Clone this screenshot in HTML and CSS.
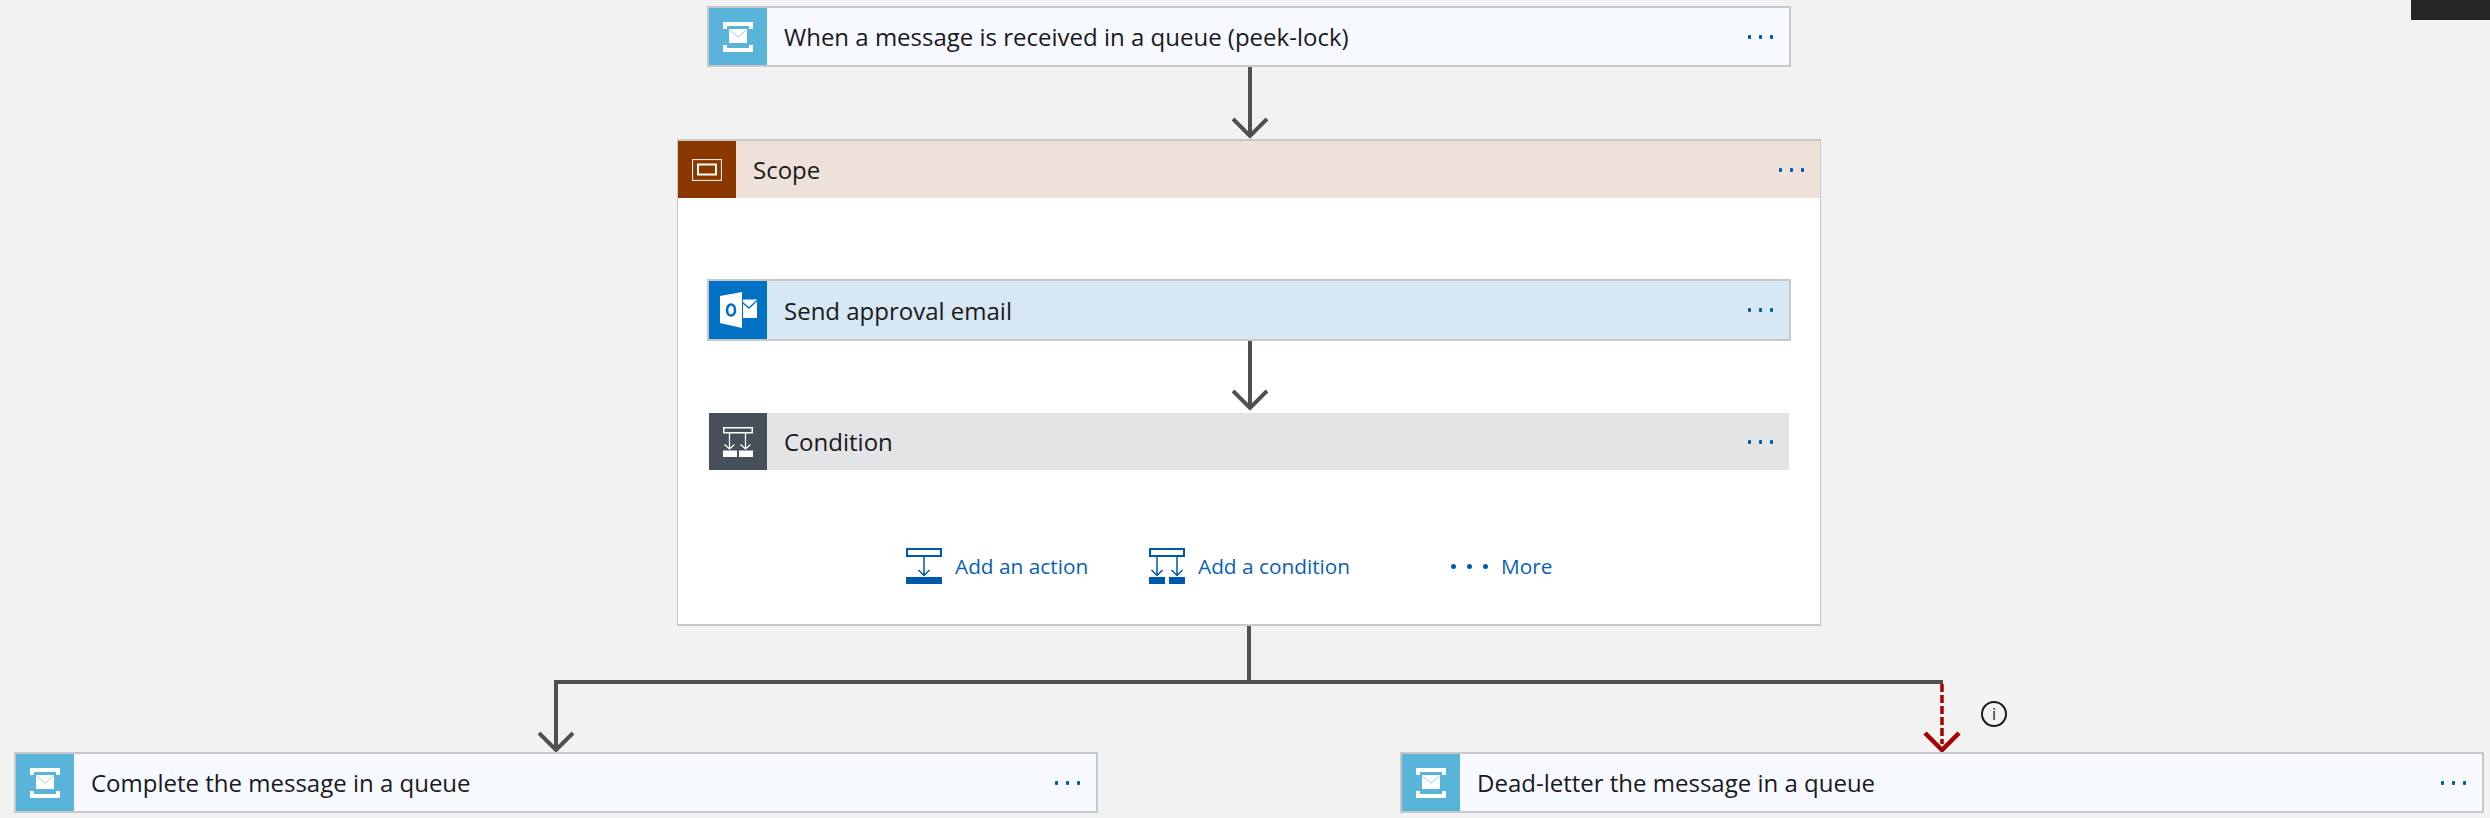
FILE: index.html
```html
<!DOCTYPE html>
<html lang="en">
<head>
    <meta charset="UTF-8">
    <title>Logic app designer</title>
    <link rel="stylesheet" href="styles.css">
</head>
<body>
    <div class="corner-block"></div>
    <div class="flow">
        <div class="card card-queue">
            <div class="card-icon icon-queue">
                <svg class="queue-svg" viewBox="0 0 30 30"><use href="#queue-glyph"/></svg>
            </div>
            <span class="card-title">When a message is received in a queue (peek-lock)</span>
            <div class="dots"><i></i><i></i><i></i></div>
        </div>

        <svg class="arrow" viewBox="0 0 36 72"><path d="M18 0V69M1 52L18 69L35 52"/></svg>

        <div class="scope">
            <div class="scope-head">
                <div class="card-icon icon-scope">
                    <svg class="scope-svg" viewBox="0 0 30 22">
                        <rect x="0.5" y="0.5" width="29" height="21" fill="none" stroke="#fff" stroke-width="1.2" stroke-opacity="0.9"/>
                        <rect x="6" y="5.5" width="18" height="10" fill="none" stroke="#fff" stroke-width="2"/>
                    </svg>
                </div>
                <span class="card-title">Scope</span>
                <div class="dots"><i></i><i></i><i></i></div>
            </div>
            <div class="scope-body">
                <div class="card card-send">
                    <div class="card-icon icon-outlook">
                        <svg class="outlook-svg" viewBox="0 0 40 40">
                            <path d="M2 6L24 2V38L2 33Z" fill="#fff"/>
                            <ellipse cx="13" cy="20" rx="4" ry="5.5" fill="none" stroke="#0072c6" stroke-width="2.6"/>
                            <rect x="25" y="9.5" width="14" height="18.5" fill="#fff"/>
                            <path d="M25 13L31 18L39 10.5" fill="none" stroke="#0072c6" stroke-width="1.4"/>
                        </svg>
                    </div>
                    <span class="card-title">Send approval email</span>
                    <div class="dots"><i></i><i></i><i></i></div>
                </div>

                <svg class="arrow arrow-inner" viewBox="0 0 36 70"><path d="M18 0V67M1 50L18 67L35 50"/></svg>

                <div class="card card-condition">
                    <div class="card-icon icon-condition">
                        <svg class="queue-svg" viewBox="0 0 30 30">
                            <rect x="0.75" y="0.75" width="28.5" height="5" fill="none" stroke="#fff" stroke-width="1.5"/>
                            <path d="M6.5 6V22M1.5 17.5L6.5 22L11.5 17.5M22.5 6V22M17.5 17.5L22.5 22L27.5 17.5" fill="none" stroke="#fff" stroke-width="1.3"/>
                            <rect x="0" y="23.5" width="14" height="6.5" fill="#fff"/>
                            <rect x="16" y="23.5" width="14" height="6.5" fill="#fff"/>
                        </svg>
                    </div>
                    <span class="card-title">Condition</span>
                    <div class="dots"><i></i><i></i><i></i></div>
                </div>

                <div class="actions">
                    <a class="action">
                        <svg class="action-svg" viewBox="0 0 36 36">
                            <rect x="1" y="1" width="34" height="7" fill="none" stroke="#0058ad" stroke-width="2"/>
                            <path d="M18 9V27M12.5 22L18 27.5L23.5 22" fill="none" stroke="#0058ad" stroke-width="1.5"/>
                            <rect y="29" width="36" height="7" fill="#0058ad"/>
                        </svg>
                        <span>Add an action</span>
                    </a>
                    <a class="action">
                        <svg class="action-svg" viewBox="0 0 36 36">
                            <rect x="1" y="1" width="34" height="7" fill="none" stroke="#0058ad" stroke-width="2"/>
                            <path d="M8 9V27M2.5 22L8 27.5L13.5 22M28 9V27M22.5 22L28 27.5L33.5 22" fill="none" stroke="#0058ad" stroke-width="1.5"/>
                            <rect y="29" width="16" height="7" fill="#0058ad"/>
                            <rect x="20" y="29" width="16" height="7" fill="#0058ad"/>
                        </svg>
                        <span>Add a condition</span>
                    </a>
                    <a class="action">
                        <div class="more-dots"><i></i><i></i><i></i></div>
                        <span>More</span>
                    </a>
                </div>
            </div>
        </div>

        <div class="branch">
            <svg class="branch-svg" viewBox="0 0 2471 126">
                <path d="M1235 0V56M542 56H1929M542 54V124M525 107L542 124L559 107" fill="none" stroke="#505050" stroke-width="4"/>
                <path d="M1928 58V118" fill="none" stroke="#a80000" stroke-width="3.5" stroke-dasharray="8 3"/>
                <path d="M1911 107L1928 124L1945 107" fill="none" stroke="#a80000" stroke-width="4.5"/>
            </svg>
            <span class="info">i</span>
        </div>

        <div class="bottom-row">
            <div class="card card-queue">
                <div class="card-icon icon-queue">
                    <svg class="queue-svg" viewBox="0 0 30 30"><use href="#queue-glyph"/></svg>
                </div>
                <span class="card-title">Complete the message in a queue</span>
                <div class="dots"><i></i><i></i><i></i></div>
            </div>
            <div class="card card-queue">
                <div class="card-icon icon-queue">
                    <svg class="queue-svg" viewBox="0 0 30 30"><use href="#queue-glyph"/></svg>
                </div>
                <span class="card-title">Dead-letter the message in a queue</span>
                <div class="dots"><i></i><i></i><i></i></div>
            </div>
        </div>
    </div>

    <svg class="defs" width="0" height="0">
        <defs>
            <g id="queue-glyph">
                <path d="M0 0H30V7H26V4H4V7H0Z" fill="#fff"/>
                <path d="M0 30H30V23H26V26H4V23H0Z" fill="#fff"/>
                <rect x="6" y="7" width="18" height="14" fill="#fff"/>
                <path d="M6.5 8L15 15L23.5 8" fill="none" stroke="#9fd3ea" stroke-width="1"/>
            </g>
        </defs>
    </svg>
</body>
</html>
```

FILE: styles.css
```css
html, body {
    margin: 0;
    height: 818px;
    overflow: hidden;
}
body {
    position: relative;
    background-color: #f2f2f2;
    font-family: "Open Sans", "Liberation Sans", sans-serif;
    color: #1a1a1a;
}
.corner-block {
    position: absolute;
    top: 0;
    right: 0;
    width: 79px;
    height: 20px;
    background-color: #252525;
}
.defs {
    position: absolute;
}
.flow {
    display: flex;
    flex-direction: column;
    align-items: center;
    width: 2470px;
    margin-left: 14px;
    padding-top: 6px;
}
.card {
    display: flex;
    align-items: center;
    box-sizing: border-box;
    width: 1084px;
    height: 61px;
    border: 2px solid #c8c8c8;
    flex-shrink: 0;
}
.card-queue {
    background-color: #f6f9ff;
}
.card-send {
    height: 62px;
    background-color: #d7e8f4;
}
.card-condition {
    border-color: transparent;
    background-color: #e3e4e6;
    background-clip: padding-box;
}
.card-icon {
    display: flex;
    align-items: center;
    justify-content: center;
    width: 58px;
    height: 100%;
    flex-shrink: 0;
}
.icon-queue {
    background-color: #59b4d9;
}
.icon-outlook {
    background-color: #0072c6;
}
.icon-condition {
    background-color: #474f5b;
}
.icon-scope {
    background-color: #8a3800;
}
.queue-svg {
    width: 30px;
    height: 30px;
}
.outlook-svg {
    width: 40px;
    height: 40px;
}
.scope-svg {
    width: 30px;
    height: 22px;
}
.card-title {
    flex: 1;
    margin-left: 17px;
    font-size: 24px;
    white-space: nowrap;
}
.dots {
    display: flex;
    gap: 8px;
    margin-right: 16px;
}
.dots i {
    width: 3px;
    height: 4px;
    border-radius: 1px;
    background-color: #0058ad;
}
.arrow {
    display: block;
    width: 36px;
    height: 72px;
    margin-left: 2px;
    flex-shrink: 0;
}
.arrow path {
    fill: none;
    stroke: #505050;
    stroke-width: 4;
}
.arrow-inner {
    height: 70px;
    margin-left: 525px;
}
.scope {
    box-sizing: border-box;
    width: 1144px;
    height: 487px;
    border: 2px solid #c8c8c8;
    border-left-width: 1px;
    border-right-width: 1px;
    background-color: #fff;
}
.scope-head {
    display: flex;
    align-items: center;
    height: 57px;
    background-color: #eee1da;
}
.scope-body {
    padding: 81px 29px 0;
}
.actions {
    display: grid;
    grid-template-columns: 243px 302px auto;
    margin-top: 76px;
    padding-left: 199px;
    font-size: 20.8px;
    color: #0b5fb5;
}
.action {
    display: flex;
    align-items: center;
    gap: 13px;
    height: 36px;
}
.action-svg {
    width: 36px;
    height: 36px;
}
.more-dots {
    display: flex;
    gap: 11px;
}
.more-dots i {
    width: 5px;
    height: 5px;
    border-radius: 50%;
    background-color: #0058ad;
}
.branch {
    position: relative;
    width: 100%;
    height: 126px;
    flex-shrink: 0;
}
.branch-svg {
    display: block;
    width: 2471px;
    height: 126px;
}
.info {
    position: absolute;
    left: 1967px;
    top: 75px;
    box-sizing: border-box;
    width: 26px;
    height: 26px;
    border: 2px solid #1a1a1a;
    border-radius: 50%;
    font-size: 16px;
    line-height: 22px;
    text-align: center;
}
.bottom-row {
    display: flex;
    justify-content: space-between;
    width: 100%;
}
```
